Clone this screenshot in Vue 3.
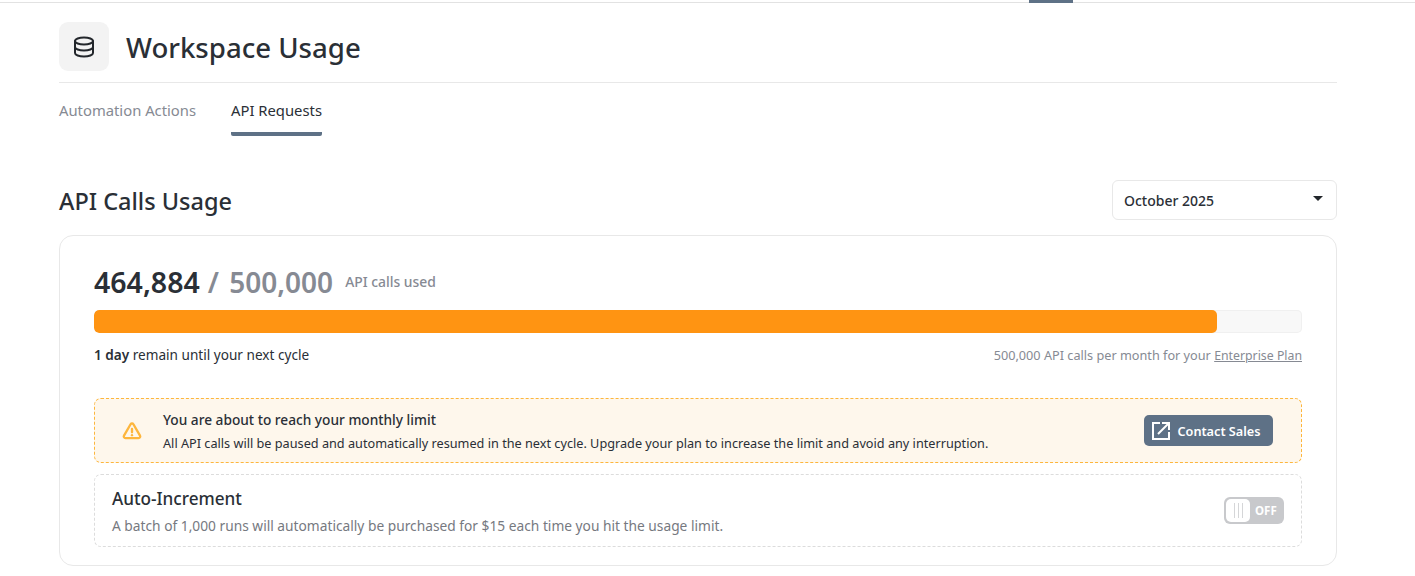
<template>
  <div class="page">
    <div class="topbar">
      <span class="topbar-tab"></span>
    </div>

    <div class="content">
      <header class="head">
        <div class="head-icon">
          <svg width="24" height="24" viewBox="0 0 24 24" fill="none" stroke="currentColor" stroke-width="2" stroke-linecap="round" stroke-linejoin="round">
            <ellipse cx="12" cy="6" rx="9" ry="3.5" />
            <path d="M3 6v6c0 1.9 4 3.5 9 3.5s9-1.6 9-3.5V6" />
            <path d="M3 12v6c0 1.9 4 3.5 9 3.5s9-1.6 9-3.5v-6" />
          </svg>
        </div>
        <h1>Workspace Usage</h1>
      </header>

      <nav class="tabs">
        <a v-for="tab in tabs" :key="tab" class="tab" :class="{ active: tab === activeTab }">{{ tab }}</a>
      </nav>

      <div class="section-head">
        <h2>API Calls Usage</h2>
        <div class="select">
          <span>October 2025</span>
          <i class="caret"></i>
        </div>
      </div>

      <section class="card">
        <div class="count">
          <strong>{{ used }}</strong>
          <span class="total">/ {{ limit }}</span>
          <span class="count-label">API calls used</span>
        </div>

        <div class="bar">
          <div class="bar-fill" :style="{ width: percent + '%' }"></div>
        </div>

        <div class="bar-info">
          <span class="remain"><b>1 day</b> remain until your next cycle</span>
          <span class="plan">500,000 API calls per month for your <u>Enterprise Plan</u></span>
        </div>

        <div class="alert">
          <svg class="alert-icon" width="20" height="20" viewBox="0 0 24 24" fill="none" stroke="#fdb63d" stroke-width="2.8" stroke-linecap="round" stroke-linejoin="round">
            <path d="M10.3 3.9 2.4 17.5a2 2 0 0 0 1.7 3h15.8a2 2 0 0 0 1.7-3L13.7 3.9a2 2 0 0 0-3.4 0z" />
            <path d="M12 9.5v4" />
            <path d="M12 17h.01" />
          </svg>
          <div class="alert-text">
            <div class="alert-title">You are about to reach your monthly limit</div>
            <div class="alert-desc">All API calls will be paused and automatically resumed in the next cycle. Upgrade your plan to increase the limit and avoid any interruption.</div>
          </div>
          <button class="contact">
            <svg width="20" height="20" viewBox="0 0 20 20" fill="none" stroke="#fff" stroke-width="2">
              <path d="M9 2H2v16h16v-7" />
              <path d="M7 13 17 3" />
              <path d="M11 2h7v7" />
            </svg>
            Contact Sales
          </button>
        </div>

        <div class="auto">
          <div>
            <div class="auto-title">Auto-Increment</div>
            <div class="auto-desc">A batch of 1,000 runs will automatically be purchased for $15 each time you hit the usage limit.</div>
          </div>
          <div class="toggle">
            <span class="knob"><i></i><i></i><i></i></span>
            <span class="toggle-text">OFF</span>
          </div>
        </div>
      </section>
    </div>
  </div>
</template>

<script setup>
const tabs = ['Automation Actions', 'API Requests']
const activeTab = 'API Requests'
const used = '464,884'
const limit = '500,000'
const percent = 93.0
</script>

<style>
html, body {
  margin: 0;
  background: #fff;
}
</style>

<style scoped>
.page {
  font-family: "Noto Sans", "Open Sans", sans-serif;
  color: #2a2f36;
  height: 576px;
  overflow: hidden;
}
.topbar {
  height: 3px;
  box-sizing: border-box;
  border-bottom: 1px solid #e2e2e2;
  padding-left: 1029px;
}
.topbar-tab {
  display: block;
  width: 44px;
  height: 3px;
  background: #5e7186;
}
.content {
  width: 1278px;
  margin-left: 59px;
}
.head {
  display: flex;
  align-items: center;
  gap: 17px;
  margin-top: 19px;
  padding-bottom: 11px;
  border-bottom: 1px solid #e8e8e8;
}
.head-icon {
  width: 50px;
  height: 49px;
  border-radius: 9px;
  background: #f3f3f3;
  display: flex;
  align-items: center;
  justify-content: center;
  color: #22262b;
}
h1 {
  margin: 2px 0 0;
  font-size: 27.6px;
  font-weight: 500;
  line-height: 47px;
}
.tabs {
  display: flex;
  gap: 35px;
  margin-top: 17px;
}
.tab {
  display: block;
  font-size: 14.8px;
  line-height: 20px;
  padding-bottom: 12px;
  border-bottom: 4px solid transparent;
  color: #868a93;
}
.tab.active {
  color: #2a2f36;
  border-bottom-color: #5e7186;
  border-radius: 2px;
}
.section-head {
  display: flex;
  align-items: center;
  justify-content: space-between;
  margin-top: 44px;
}
h2 {
  margin: 2px 0 0;
  font-size: 23.5px;
  font-weight: 500;
  line-height: 38px;
}
.select {
  width: 225px;
  height: 40px;
  box-sizing: border-box;
  border: 1px solid #e8e8e8;
  border-radius: 6px;
  padding: 1px 13px 0 11px;
  display: flex;
  align-items: center;
  justify-content: space-between;
  font-size: 14px;
  font-weight: 500;
}
.caret {
  width: 0;
  height: 0;
  margin-bottom: 5px;
  border-left: 5px solid transparent;
  border-right: 5px solid transparent;
  border-top: 5px solid #22262b;
}
.card {
  margin-top: 15px;
  height: 331px;
  box-sizing: border-box;
  border: 1px solid #e8e8e8;
  border-radius: 14px;
  padding: 25px 34px 0;
}
.count {
  display: flex;
  align-items: flex-start;
  height: 49px;
  line-height: 42px;
}
.count strong {
  font-size: 28.5px;
  font-weight: 600;
}
.total {
  margin-left: 8px;
  font-size: 28px;
  font-weight: 600;
  word-spacing: 3px;
  color: #868a93;
}
.count-label {
  margin-left: 12px;
  font-size: 13.9px;
  font-weight: 500;
  line-height: 42px;
  color: #868a93;
}
.bar {
  height: 23px;
  box-sizing: border-box;
  background: #f8f8f8;
  border-radius: 5px;
  box-shadow: inset 0 0 0 1px #f0f0f0;
  overflow: hidden;
}
.bar-fill {
  height: 100%;
  background: #ff9412;
  border-radius: 5px;
}
.bar-info {
  display: flex;
  align-items: center;
  justify-content: space-between;
  height: 20px;
  margin-top: 12px;
}
.remain {
  font-size: 13.6px;
  margin-bottom: 2px;
}
.remain b {
  font-weight: 600;
}
.plan {
  font-size: 12.7px;
  color: #868a93;
}
.plan u {
  font-size: 12.3px;
}
.alert {
  margin-top: 33px;
  height: 65px;
  box-sizing: border-box;
  display: flex;
  align-items: center;
  background: #fef7ec;
  border: 1px dashed #fdb63d;
  border-radius: 7px;
  padding: 0 28px 0 27px;
}
.alert-icon {
  flex: none;
  margin-right: 21px;
}
.alert-text {
  flex: 1;
}
.alert-title {
  font-size: 13.7px;
  font-weight: 500;
  line-height: 20px;
}
.alert-desc {
  font-size: 12.7px;
  line-height: 17px;
  margin-top: 5px;
}
.contact {
  flex: none;
  width: 129px;
  height: 31px;
  border: 0;
  border-radius: 5px;
  background: #5e7186;
  color: #fff;
  font-family: inherit;
  font-size: 12.7px;
  font-weight: 600;
  display: flex;
  align-items: center;
  justify-content: center;
  gap: 6px;
  padding: 0 5px 0 0;
}
.auto {
  margin-top: 11px;
  height: 73px;
  box-sizing: border-box;
  display: flex;
  align-items: center;
  justify-content: space-between;
  border: 1px dashed #dcdcdc;
  border-radius: 7px;
  padding: 0 17px;
}
.auto-title {
  font-size: 17.15px;
  font-weight: 500;
  line-height: 24px;
}
.auto-desc {
  margin-top: 6px;
  font-size: 13.75px;
  line-height: 18px;
  color: #76797f;
}
.toggle {
  width: 60px;
  height: 27px;
  box-sizing: border-box;
  background: #c8c9cc;
  border-radius: 6px;
  padding: 2px;
  display: flex;
  align-items: center;
  gap: 5px;
}
.knob {
  width: 24px;
  height: 23px;
  background: #fff;
  border-radius: 5px;
  display: flex;
  align-items: center;
  justify-content: center;
  gap: 3px;
}
.knob i {
  width: 1px;
  height: 15px;
  background: #d5d6d8;
}
.toggle-text {
  color: #fff;
  font-size: 11.5px;
  font-weight: 700;
}
</style>
